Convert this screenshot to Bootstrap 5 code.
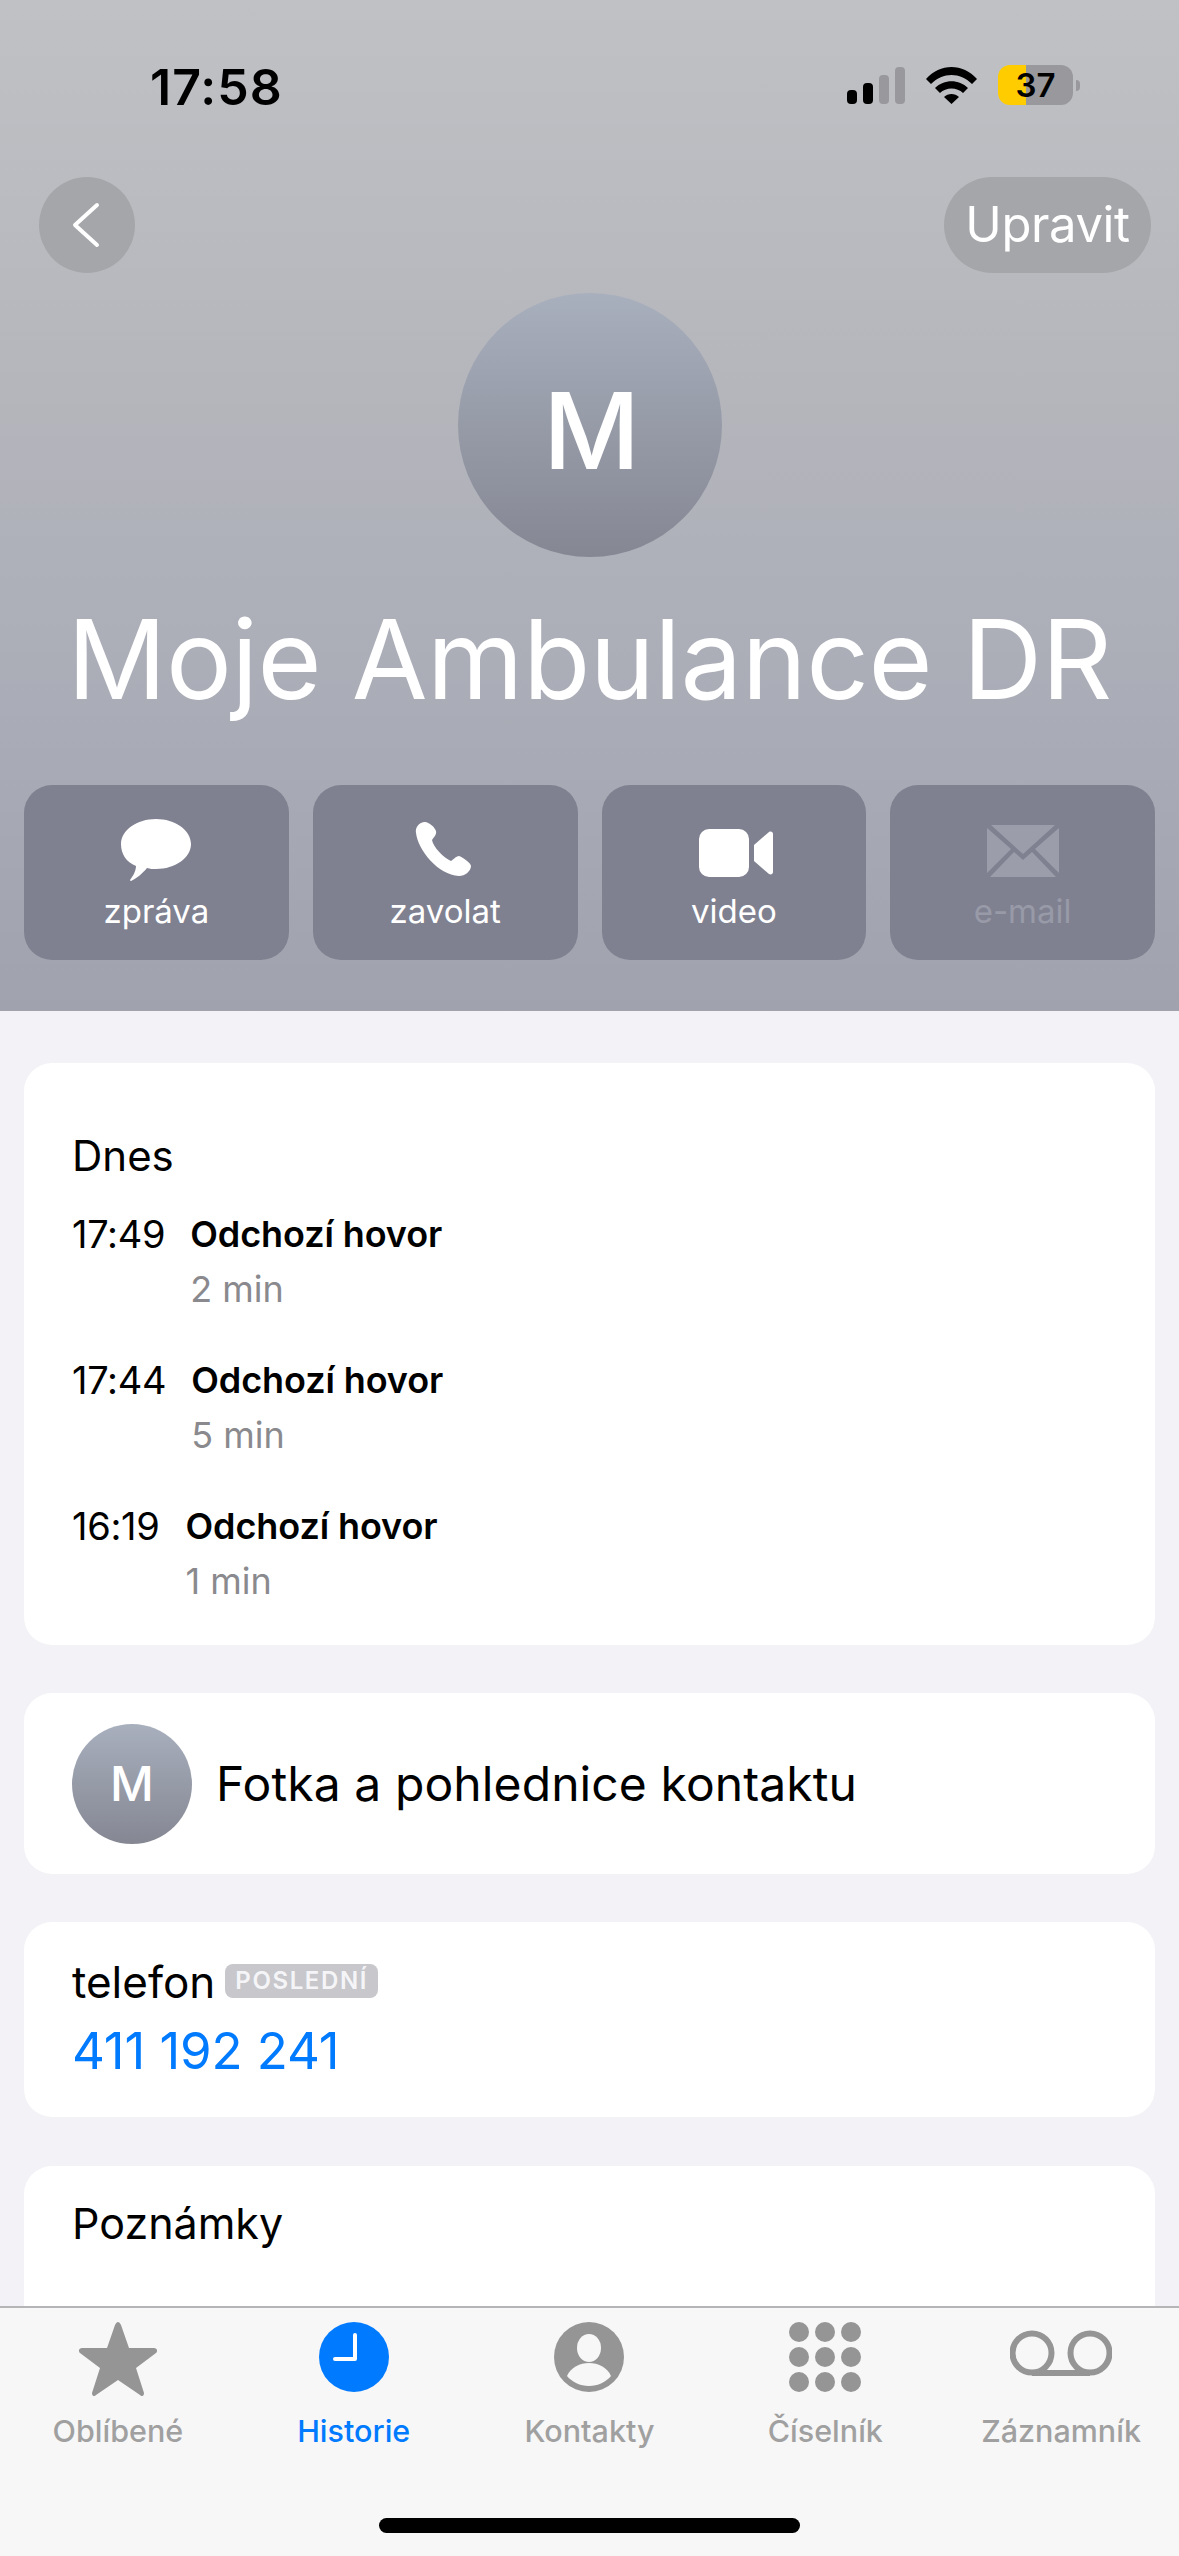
<!doctype html>
<html lang="cs">
<head>
<meta charset="utf-8">
<title>Moje Ambulance DR</title>
<link href="https://cdn.jsdelivr.net/npm/bootstrap@5.3.0/dist/css/bootstrap.min.css" rel="stylesheet">
<style>
html,body{height:100%;margin:0}
body{font-family:Inter,"Noto Sans",sans-serif;background:#f2f2f7;color:#000;overflow:hidden}
.phone{height:2556px}
.hero{height:1011px;background:linear-gradient(180deg,#c0c1c5 0%,#b6b7bc 35%,#adafb9 60%,#a0a2ae 100%);flex:none;padding:0 24px}
.status{height:177px;padding:65px 0 0 126px;margin-right:-24px}
.clock{font-size:50px;font-weight:600;line-height:44px;width:682px;letter-spacing:1px}
.status-icons{gap:21px;margin-left:15px}
.batt{width:75px;height:40px;border-radius:12px;background:linear-gradient(90deg,#ffcc00 37.5%,#98989d 37.5%);font-size:33px;font-weight:600;line-height:40px;text-align:center}
.batt-nub{width:4px;height:11px;background:#98989d;border-radius:0 4px 4px 0;margin-left:3px}
.navrow{height:96px;margin:0 4px 0 15px}
.roundbtn{width:96px;height:96px;border-radius:50%;background:#a5a6aa;padding-right:3px}
.pillbtn{height:96px;width:207px;border-radius:48px;background:#a5a6aa;color:#fff;font-size:49px;font-weight:400;line-height:96px;text-align:center;letter-spacing:-.4px}
.avatar-xl{width:264px;height:264px;margin:20px auto 0;padding-left:4px;border-radius:50%;background:linear-gradient(180deg,#a8afbd,#858793);color:#fff;font-size:106px;font-weight:500;line-height:276px;text-align:center}
.name{font-size:110px;font-weight:400;color:#fff;line-height:136px;margin:0;padding-top:34px;text-align:center;white-space:nowrap;letter-spacing:-.5px;height:228px}
.actions{gap:24px}
.action{flex:1 1 0;height:175px;border-radius:28px;background:#7f8191;color:#fff;font-size:33px;line-height:36px;text-align:center}
.action svg{display:block}
.action .ico{height:108px;padding-bottom:12px}
.muted-action{color:#989aa8}
.body-area{padding:52px 24px 0;overflow:hidden;min-height:0}
.sheet{background:#fff;border-radius:28px;margin-bottom:49px;padding:0 48px}
.sheet.hist{height:582px;padding-top:65px;margin-bottom:48px}
.day{font-size:42px;line-height:56px;margin-bottom:25px}
.callrow{height:146px;font-size:36px;line-height:50px}
.calltime{font-size:38px;margin-right:25px;letter-spacing:-.3px}
.calltime.narrow{margin-right:26px}
.calltype{font-weight:600;letter-spacing:-.1px}
.calldur{color:#8a8a8e;margin-top:5px}
.sheet.photo{height:181px;gap:24px;font-size:48px;letter-spacing:.1px;margin-bottom:48px}
.avatar-sm{width:120px;height:120px;border-radius:50%;background:linear-gradient(180deg,#a8afbd,#858793);color:#fff;font-size:48px;font-weight:500;line-height:120px;text-align:center;flex:none;letter-spacing:0}
.sheet.tel{height:195px;padding-top:32px}
.tel-label{font-size:44px;line-height:56px}
.tag{background:#c7c7cc;color:#f5f5f8;font-size:24px;font-weight:600;letter-spacing:1.6px;border-radius:8px;padding:0 10px;line-height:34px;height:34px;margin:0 0 2px 10px}
.tel-num{font-size:51px;line-height:60px;color:#007aff;margin-top:11px;letter-spacing:-.1px}
.sheet.notes{height:300px;padding-top:29px;font-size:43px;line-height:56px;margin-bottom:0}
.tabbar{flex:none;height:250px;background:#f7f7f7;border-top:2px solid #b5b5b8}
.tabs{height:191px}
.tabitem{width:236px;color:#a0a0a0;font-size:30.500px;font-weight:500;line-height:36px;text-align:center;white-space:nowrap}
.tabitem.on{color:#007aff}
.tabitem .tabico{height:105px;padding-top:14px}
.tabitem svg{display:block}
.home{width:421px;height:15px;border-radius:8px;background:#000;margin:19px auto 0}
</style>
</head>
<body>
<div class="phone d-flex flex-column">
  <header class="hero">
    <div class="status d-flex align-items-start">
      <div class="clock">17:58</div>
      <div class="d-flex align-items-center status-icons">
        <svg width="58" height="37" viewBox="0 0 58 37"><rect x="0" y="23" width="10" height="14" rx="4"/><rect x="16" y="16" width="10" height="21" rx="4"/><rect x="32" y="8" width="10" height="29" rx="4" fill="#98989d"/><rect x="48" y="0" width="10" height="37" rx="4" fill="#98989d"/></svg>
        <svg width="51" height="37" viewBox="0 0 51 37"><path d="M0 12C14-4 37-4 51 12l-5 5C34 5 17 5 5 17zM9 21c9-9 24-9 33 0l-5 5c-6-6-17-6-23 0zM18 30c4-4 11-4 15 0l-7.500 7z"/></svg>
        <div class="d-flex align-items-center">
          <div class="batt">37</div>
          <div class="batt-nub"></div>
        </div>
      </div>
    </div>
    <div class="navrow d-flex justify-content-between">
      <div class="roundbtn d-flex align-items-center justify-content-center">
        <svg width="32" height="46" viewBox="0 0 32 46"><path d="M27 3 5 23l22 20" fill="none" stroke="#fff" stroke-width="4" stroke-linecap="round" stroke-linejoin="round"/></svg>
      </div>
      <div class="pillbtn">Upravit</div>
    </div>
    <div class="avatar-xl">M</div>
    <h1 class="name">Moje Ambulance DR</h1>
    <div class="actions d-flex">
      <div class="action">
        <div class="ico d-flex align-items-end justify-content-center">
          <svg width="70" height="62" viewBox="0 0 70 62"><path d="M35 0c19 0 35 11 35 25S54 50 35 50c-3 0-6 0-9-1-4 5-11 11-16 13-1 0-1-1-1-1 3-4 6-9 6-14C5 43 0 35 0 25 0 11 16 0 35 0z" fill="#fff"/></svg>
        </div>
        zpráva
      </div>
      <div class="action">
        <div class="ico d-flex align-items-end justify-content-center">
          <svg class="mb-1 me-1" width="56" height="56" viewBox="0 0 56 56"><path d="M9 1C4 2 0 6 1 12c2 17 22 42 43 43 6 0 12-5 12-10 0-3-9-9-12-10-3 0-6 4-8 5-7-3-18-14-19-21 1-2 5-5 4-9C20 6 13 0 9 1z" fill="#fff"/></svg>
        </div>
        zavolat
      </div>
      <div class="action">
        <div class="ico d-flex align-items-end justify-content-center">
          <svg class="mb-1 ms-1" width="74" height="48" viewBox="0 0 74 48"><rect x="0" y="0" width="50" height="48" rx="10" fill="#fff"/><path d="M55 16 70 3c2-1 4 0 4 2v38c0 2-2 3-4 2L55 32z" fill="#fff"/></svg>
        </div>
        video
      </div>
      <div class="action muted-action">
        <div class="ico d-flex align-items-end justify-content-center">
          <svg class="mb-1" width="72" height="52" viewBox="0 0 72 52"><path d="M4 0h64L36 29zM0 3v45l24-24zM72 3v45L48 24zM3 52l24-25 9 8 9-8 24 25z" fill="#9b9dab"/></svg>
        </div>
        e-mail
      </div>
    </div>
  </header>

  <main class="body-area flex-grow-1">
    <section class="sheet hist">
      <div class="day">Dnes</div>
      <div class="callrow d-flex">
        <div class="calltime">17:49</div>
        <div><div class="calltype">Odchozí hovor</div><div class="calldur">2 min</div></div>
      </div>
      <div class="callrow d-flex">
        <div class="calltime">17:44</div>
        <div><div class="calltype">Odchozí hovor</div><div class="calldur">5 min</div></div>
      </div>
      <div class="callrow d-flex">
        <div class="calltime narrow">16:19</div>
        <div><div class="calltype">Odchozí hovor</div><div class="calldur">1 min</div></div>
      </div>
    </section>
    <section class="sheet photo d-flex align-items-center">
      <div class="avatar-sm">M</div>
      <div>Fotka a pohlednice kontaktu</div>
    </section>
    <section class="sheet tel">
      <div class="d-flex align-items-center">
        <span class="tel-label">telefon</span><span class="tag">POSLEDNÍ</span>
      </div>
      <div class="tel-num">411 192 241</div>
    </section>
    <section class="sheet notes">Poznámky</section>
  </main>

  <nav class="tabbar">
    <div class="tabs d-flex justify-content-center">
      <div class="tabitem">
        <div class="tabico d-flex justify-content-center">
          <svg class="mt-n1" width="78" height="74" viewBox="0 0 78 74"><path d="M39 0c1 0 2 1 3 3l8 23h25c3 0 4 3 2 5L57 46l8 25c0 3-2 4-4 2L39 58 17 73c-2 2-4 1-4-2l8-25L1 31c-2-2-1-5 2-5h25l8-23c1-2 2-3 3-3z" fill="#959595"/></svg>
        </div>
        Oblíbené
      </div>
      <div class="tabitem on">
        <div class="tabico d-flex justify-content-center">
          <svg width="70" height="70" viewBox="0 0 70 70"><circle cx="35" cy="35" r="35" fill="#007aff"/><path d="M36 13v24H16" fill="none" stroke="#fff" stroke-width="4" stroke-linecap="round" stroke-linejoin="round"/></svg>
        </div>
        Historie
      </div>
      <div class="tabitem">
        <div class="tabico d-flex justify-content-center">
          <svg width="70" height="70" viewBox="0 0 70 70"><circle cx="35" cy="35" r="35" fill="#959595"/><ellipse cx="35" cy="26" rx="12" ry="14" fill="#f7f7f7"/><path d="M13 54c4-9 13-13 22-13s18 4 22 13c-5 6-13 10-22 10S18 60 13 54z" fill="#f7f7f7"/></svg>
        </div>
        Kontakty
      </div>
      <div class="tabitem">
        <div class="tabico d-flex justify-content-center">
          <svg width="72" height="70" viewBox="0 0 72 70" fill="#959595"><circle cx="10" cy="10" r="10"/><circle cx="36" cy="10" r="10"/><circle cx="62" cy="10" r="10"/><circle cx="10" cy="35" r="10"/><circle cx="36" cy="35" r="10"/><circle cx="62" cy="35" r="10"/><circle cx="10" cy="60" r="10"/><circle cx="36" cy="60" r="10"/><circle cx="62" cy="60" r="10"/></svg>
        </div>
        Číselník
      </div>
      <div class="tabitem">
        <div class="tabico d-flex justify-content-center">
          <svg class="mt-2" width="102" height="46" viewBox="0 0 102 46"><path d="M22 43h58" fill="none" stroke="#959595" stroke-width="6"/><circle cx="22" cy="23" r="19.500" fill="none" stroke="#959595" stroke-width="6"/><circle cx="80" cy="23" r="19.500" fill="none" stroke="#959595" stroke-width="6"/></svg>
        </div>
        Záznamník
      </div>
    </div>
    <div class="home"></div>
  </nav>
</div>
<script src="https://cdn.jsdelivr.net/npm/bootstrap@5.3.0/dist/js/bootstrap.bundle.min.js"></script>
</body>
</html>
